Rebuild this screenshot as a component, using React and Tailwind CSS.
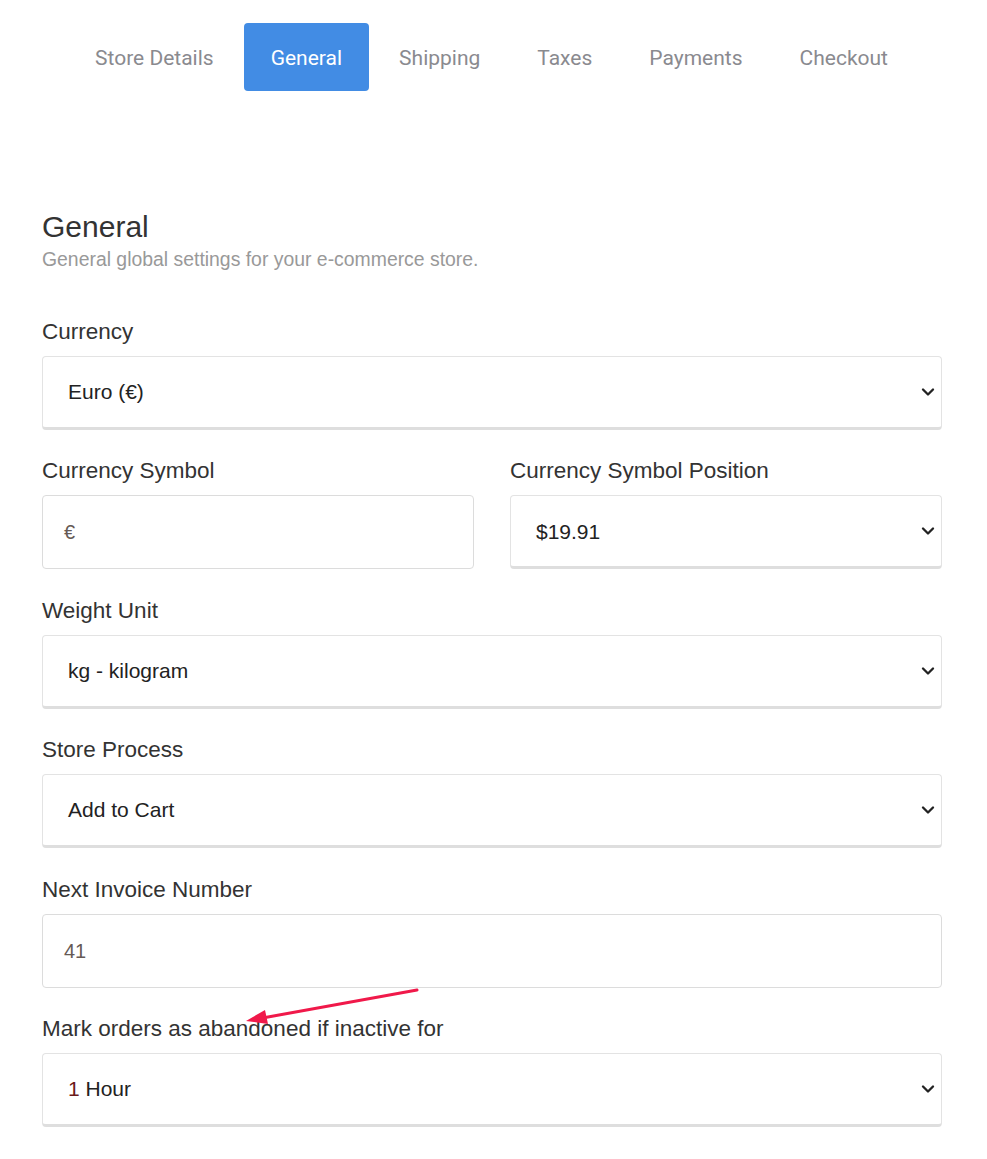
import React, { useState } from "react";
import { ChevronDown } from "lucide-react";

const tabs = ["Store Details", "General", "Shipping", "Taxes", "Payments", "Checkout"];

function Label({ children }) {
  return <label className="block text-[22.5px] leading-[28px] text-[#333] mb-[10px]">{children}</label>;
}

function SelectBox({ children }) {
  return (
    <div className="relative h-[74px] bg-white border border-[#e3e3e3] border-b-[3px] border-b-[#dedede] rounded-[4px] flex items-center pl-[25px] pr-[3px]">
      <span className="text-[21px] text-[#222]">{children}</span>
      <ChevronDown className="ml-auto w-[20px] h-[20px] text-[#222]" strokeWidth={2.8} />
    </div>
  );
}

function TextBox({ value }) {
  return (
    <div className="h-[74px] bg-white border border-[#dcdcdc] rounded-[4px] flex items-center pl-[21px]">
      <span className="text-[20px] text-[#665a55]">{value}</span>
    </div>
  );
}

export default function App() {
  const [active, setActive] = useState("General");

  return (
    <div className="min-h-[1159px] bg-white" style={{ fontFamily: "'Liberation Sans', Arial, sans-serif" }}>
      <div className="flex justify-center pt-[23px] pr-[4px] font-['Roboto',sans-serif]">
        {tabs.map((t) => (
          <button
            key={t}
            onClick={() => setActive(t)}
            className={
              "h-[68px] pt-[3px] px-[26.5px] mx-[2px] rounded-[4px] text-[21px] " +
              (active === t ? "bg-[#428ce4] text-white" : "text-[#8a8a8f]")
            }
          >
            {t}
          </button>
        ))}
      </div>

      <div className="px-[42px] pr-[45px] pt-[118px] relative">
        <h2 className="text-[30px] leading-[36px] text-[#333]">General</h2>
        <p className="text-[19.4px] leading-[24px] text-[#999] mt-[2px]">General global settings for your e-commerce store.</p>

        <div className="mt-[47px] flex flex-col gap-[27.4px]">
          <div>
            <Label>Currency</Label>
            <SelectBox>Euro (€)</SelectBox>
          </div>

          <div className="grid grid-cols-2 gap-[36px]">
            <div>
              <Label>Currency Symbol</Label>
              <TextBox value="€" />
            </div>
            <div>
              <Label>Currency Symbol Position</Label>
              <SelectBox>$19.91</SelectBox>
            </div>
          </div>

          <div>
            <Label>Weight Unit</Label>
            <SelectBox>kg - kilogram</SelectBox>
          </div>

          <div>
            <Label>Store Process</Label>
            <SelectBox>Add to Cart</SelectBox>
          </div>

          <div>
            <Label>Next Invoice Number</Label>
            <TextBox value="41" />
          </div>

          <div className="relative">
            <Label>Mark orders as abandoned if inactive for</Label>
            <SelectBox>
              <span className="text-[#6b1a1a]">1</span> Hour
            </SelectBox>
            <svg className="absolute left-[200px] top-[-40px] pointer-events-none" width="230" height="60" viewBox="200 -40 230 60">
              <line x1="375" y1="-25" x2="215" y2="4" stroke="#f0194a" strokeWidth="3" strokeLinecap="round" />
              <polygon points="204,6 223,-5 226,9" fill="#f0194a" />
            </svg>
          </div>
        </div>
      </div>
    </div>
  );
}
